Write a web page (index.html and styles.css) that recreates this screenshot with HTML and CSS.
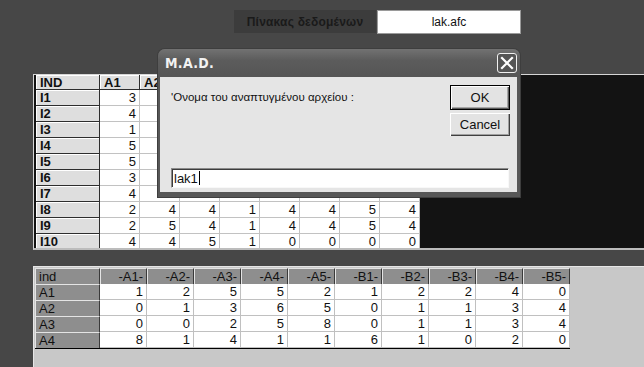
FILE: index.html
```html
<!DOCTYPE html>
<html lang="el">
<head>
<meta charset="utf-8">
<title>M.A.D.</title>
<link rel="stylesheet" href="styles.css">
</head>
<body>
<div class="topbar">
  <div class="doc-label">Πίνακας δεδομένων</div>
  <div class="doc-file">lak.afc</div>
</div>

<div class="upper">
  <div class="ugrid">
    <div class="uh">IND</div><div class="uh">A1</div><div class="uh">A2</div><div class="uh">A3</div><div class="uh">A4</div><div class="uh">A5</div><div class="uh">A6</div><div class="uh">A7</div><div class="uh">A8</div>
    <div class="ur">I1</div><div class="ud">3</div><div class="ud">2</div><div class="ud">4</div><div class="ud">1</div><div class="ud">3</div><div class="ud">4</div><div class="ud">5</div><div class="ud">4</div>
    <div class="ur">I2</div><div class="ud">4</div><div class="ud">4</div><div class="ud">4</div><div class="ud">1</div><div class="ud">4</div><div class="ud">4</div><div class="ud">5</div><div class="ud">4</div>
    <div class="ur">I3</div><div class="ud">1</div><div class="ud">2</div><div class="ud">3</div><div class="ud">1</div><div class="ud">2</div><div class="ud">3</div><div class="ud">4</div><div class="ud">0</div>
    <div class="ur">I4</div><div class="ud">5</div><div class="ud">4</div><div class="ud">4</div><div class="ud">1</div><div class="ud">4</div><div class="ud">4</div><div class="ud">5</div><div class="ud">4</div>
    <div class="ur">I5</div><div class="ud">5</div><div class="ud">5</div><div class="ud">4</div><div class="ud">1</div><div class="ud">4</div><div class="ud">4</div><div class="ud">5</div><div class="ud">4</div>
    <div class="ur">I6</div><div class="ud">3</div><div class="ud">4</div><div class="ud">5</div><div class="ud">1</div><div class="ud">0</div><div class="ud">0</div><div class="ud">0</div><div class="ud">0</div>
    <div class="ur">I7</div><div class="ud">4</div><div class="ud">4</div><div class="ud">4</div><div class="ud">1</div><div class="ud">4</div><div class="ud">4</div><div class="ud">5</div><div class="ud">4</div>
    <div class="ur">I8</div><div class="ud">2</div><div class="ud">4</div><div class="ud">4</div><div class="ud">1</div><div class="ud">4</div><div class="ud">4</div><div class="ud">5</div><div class="ud">4</div>
    <div class="ur">I9</div><div class="ud">2</div><div class="ud">5</div><div class="ud">4</div><div class="ud">1</div><div class="ud">4</div><div class="ud">4</div><div class="ud">5</div><div class="ud">4</div>
    <div class="ur">I10</div><div class="ud">4</div><div class="ud">4</div><div class="ud">5</div><div class="ud">1</div><div class="ud">0</div><div class="ud">0</div><div class="ud">0</div><div class="ud">0</div>
  </div>
</div>

<div class="gap"></div>

<div class="lower">
  <div class="lgrid">
    <div class="lc">ind</div><div class="lh">-A1-</div><div class="lh">-A2-</div><div class="lh">-A3-</div><div class="lh">-A4-</div><div class="lh">-A5-</div><div class="lh">-B1-</div><div class="lh">-B2-</div><div class="lh">-B3-</div><div class="lh">-B4-</div><div class="lh">-B5-</div>
    <div class="lr">A1</div><div class="ld">1</div><div class="ld">2</div><div class="ld">5</div><div class="ld">5</div><div class="ld">2</div><div class="ld">1</div><div class="ld">2</div><div class="ld">2</div><div class="ld">4</div><div class="ld">0</div>
    <div class="lr">A2</div><div class="ld">0</div><div class="ld">1</div><div class="ld">3</div><div class="ld">6</div><div class="ld">5</div><div class="ld">0</div><div class="ld">1</div><div class="ld">1</div><div class="ld">3</div><div class="ld">4</div>
    <div class="lr">A3</div><div class="ld">0</div><div class="ld">0</div><div class="ld">2</div><div class="ld">5</div><div class="ld">8</div><div class="ld">0</div><div class="ld">1</div><div class="ld">1</div><div class="ld">3</div><div class="ld">4</div>
    <div class="lr">A4</div><div class="ld">8</div><div class="ld">1</div><div class="ld">4</div><div class="ld">1</div><div class="ld">1</div><div class="ld">6</div><div class="ld">1</div><div class="ld">0</div><div class="ld">2</div><div class="ld">0</div>
  </div>
</div>

<div class="dialog">
  <div class="titlebar">
    <span class="title">M.A.D.</span>
    <span class="close"><svg width="14" height="14" viewBox="0 0 14 14"><path d="M2 2 L12 12 M12 2 L2 12" stroke="#fff" stroke-width="2.2" stroke-linecap="square"/></svg></span>
  </div>
  <div class="dbody">
    <div class="drow">
      <div class="prompt">'Ονομα του αναπτυγμένου αρχείου :</div>
      <div class="btns">
        <div class="btn ok">OK</div>
        <div class="btn cancel">Cancel</div>
      </div>
    </div>
    <div class="field"><span class="val">lak1</span><span class="caret"></span></div>
  </div>
</div>
</body>
</html>
```

FILE: styles.css
```css
html, body {
  margin: 0;
  padding: 0;
}
body {
  width: 644px;
  height: 367px;
  overflow: hidden;
  position: relative;
  background: #474747;
  font-family: "Liberation Sans", Arial, sans-serif;
  color: #111;
}

.topbar {
  height: 74px;
  box-sizing: border-box;
  padding: 10px 0 0 234px;
  display: flex;
  align-items: flex-start;
}
.doc-label {
  width: 142px;
  height: 23px;
  background: #3c3c3c;
  color: #1a1a1a;
  font-weight: bold;
  font-size: 12px;
  display: flex;
  align-items: center;
  justify-content: center;
  letter-spacing: 0.2px;
}
.doc-file {
  margin-left: 1px;
  width: 144px;
  height: 24px;
  box-sizing: border-box;
  background: #fff;
  border: 1px solid #9a9a9a;
  font-size: 12px;
  display: flex;
  align-items: center;
  justify-content: center;
}

.upper {
  margin-left: 33px;
  height: 176px;
  box-sizing: border-box;
  border-top: 1px solid #d6d6d6;
  border-left: 1px solid #d6d6d6;
  border-bottom: 2px solid #bcbcbc;
  padding-left: 2px;
  background: #131313;
  overflow: hidden;
}
.ugrid {
  display: grid;
  grid-template-columns: 64px repeat(8, 40px);
  grid-template-rows: 15px;
  grid-auto-rows: 16px;
  width: 384px;
  background: #fff;
  font-size: 13px;
}
.uh, .ur {
  background: #dedede;
  font-weight: bold;
  box-sizing: border-box;
  border-right: 1px solid #2e2e2e;
  border-bottom: 1px solid #2e2e2e;
  box-shadow: inset 1px 1px #fff;
  padding-left: 4px;
  line-height: 15px;
  white-space: nowrap;
}
.ud {
  box-sizing: border-box;
  border-right: 1px solid #c2c2c2;
  border-bottom: 1px solid #c2c2c2;
  text-align: right;
  padding-right: 3px;
  line-height: 16px;
}

.gap {
  height: 16px;
}

.lower {
  margin-left: 33px;
  height: 101px;
  box-sizing: border-box;
  background: #c8c8c8;
  border-top: 1px solid #e6e6e6;
  border-left: 1px solid #e6e6e6;
  padding: 1px 0 0 1px;
}
.lgrid {
  display: grid;
  grid-template-columns: 65px repeat(10, 47px);
  grid-auto-rows: 16px;
  width: 535px;
  box-sizing: border-box;
  border-right: 1px solid #000;
  border-bottom: 1px solid #000;
  background: #fff;
  font-size: 13px;
}
.lc, .lh, .lr {
  background: #8e8e8e;
  box-sizing: border-box;
  line-height: 15px;
  border-top: 1px solid #e4e4e4;
  border-left: 1px solid #e4e4e4;
  border-right: 1px solid #3a3a3a;
}
.lc, .lr {
  padding-left: 3px;
}
.lh {
  text-align: right;
  padding-right: 3px;
}
.ld {
  box-sizing: border-box;
  border-right: 1px solid #c0c0c0;
  border-bottom: 1px solid #c0c0c0;
  text-align: right;
  padding-right: 3px;
  line-height: 16px;
}

.dialog {
  position: absolute;
  left: 158px;
  top: 49px;
  width: 362px;
  height: 148px;
  box-sizing: border-box;
  background: #575757;
  border-radius: 7px 7px 0 0;
  padding: 0 3px 5px 2px;
  display: flex;
  flex-direction: column;
  box-shadow: 0 0 0 1px #3e3e3e;
}
.titlebar {
  height: 28px;
  display: flex;
  align-items: center;
  padding-left: 7px;
  background: linear-gradient(#727272, #5c5c5c 40%, #555555);
  margin: 0 -3px 0 -2px;
  padding-right: 3px;
  border-radius: 7px 7px 0 0;
}
.title {
  color: #f2f2f2;
  font-weight: bold;
  font-size: 14px;
  font-family: "DejaVu Sans Condensed", "DejaVu Sans", sans-serif;
  letter-spacing: 0.3px;
}
.close {
  margin-left: auto;
  width: 20px;
  height: 20px;
  box-sizing: border-box;
  border: 1px solid #f0f0f0;
  border-radius: 3px;
  background: #555;
  display: flex;
  align-items: center;
  justify-content: center;
}
.dbody {
  flex: 1;
  background: #e5e5e5;
  padding: 8px 7px 4px 11px;
  display: flex;
  flex-direction: column;
}
.drow {
  display: flex;
  justify-content: space-between;
}
.prompt {
  margin-top: 5px;
  font-size: 11.5px;
  line-height: 14px;
  color: #111;
}
.btns {
  display: flex;
  flex-direction: column;
  width: 60px;
}
.btn {
  box-sizing: border-box;
  background: #e3e3e3;
  font-size: 13px;
  display: flex;
  align-items: center;
  justify-content: center;
  color: #111;
}
.ok {
  height: 25px;
  border: 1px solid #000;
  box-shadow: inset 1px 1px #fff, inset -1px -1px #5a5a5a, inset -2px -2px #a6a6a6;
}
.cancel {
  height: 23px;
  margin-top: 3px;
  box-shadow: inset 1px 1px #fff, inset -1px -1px #404040, inset -2px -2px #a0a0a0;
}
.field {
  margin-top: auto;
  height: 20px;
  box-sizing: border-box;
  background: #fff;
  border: 1px solid;
  border-color: #8a8a8a #f8f8f8 #f8f8f8 #8a8a8a;
  box-shadow: inset 1px 1px #3c3c3c;
  display: flex;
  align-items: center;
  padding-left: 2px;
  font-size: 13px;
  margin-right: 1px;
}
.caret {
  width: 1px;
  height: 14px;
  background: #000;
  margin-left: 1px;
}
```
